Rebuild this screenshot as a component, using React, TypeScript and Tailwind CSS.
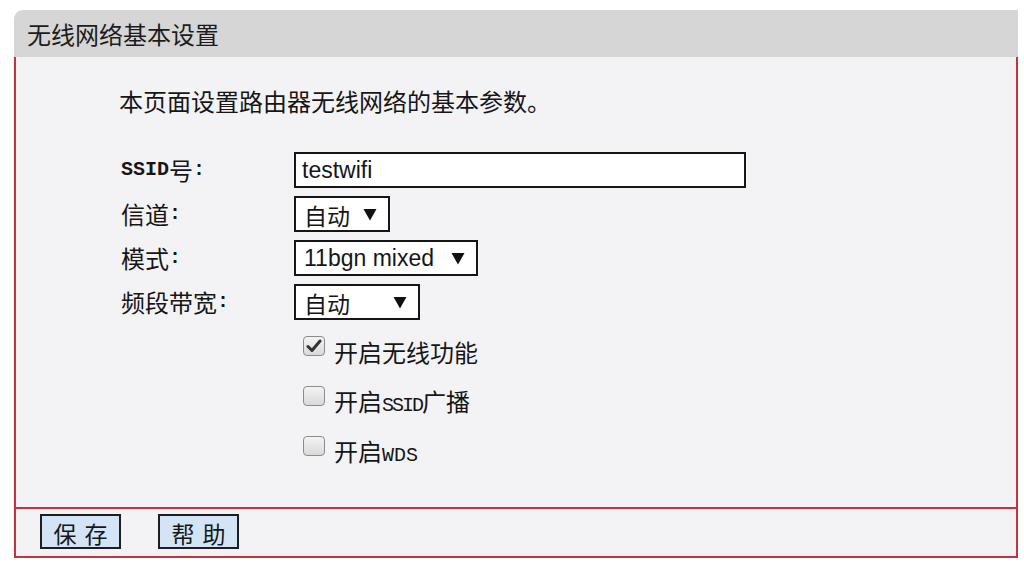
import React from "react";

const CJK = "font-['Noto_Sans_CJK_SC',sans-serif]";

function Arrow() {
  return (
    <svg width="14" height="13" viewBox="0 0 14 13" className="shrink-0">
      <polygon points="0.5,1 13.5,1 7,12.5" fill="#111" />
    </svg>
  );
}

function Label({ children }: { children: React.ReactNode }) {
  return (
    <div className={`w-[173px] flex items-center h-full text-[24px] leading-none text-[#161616] ${CJK}`}>
      {children}
    </div>
  );
}

function Colon() {
  return <span className="font-['Liberation_Mono',monospace] text-[20px] font-bold">:</span>;
}

function Select({ w, children }: { w: string; children: React.ReactNode }) {
  return (
    <div className={`${w} h-[36px] border-2 border-[#161616] bg-white flex items-center justify-between pl-[8px] pr-[11px]`}>
      {children}
    </div>
  );
}

function Checkbox({ checked }: { checked?: boolean }) {
  return (
    <div className="w-[22px] h-[20px] mb-[13px] rounded-[4px] border border-[#8c8c8c] bg-gradient-to-b from-[#f4f4f4] to-[#d9d9d9] flex items-center justify-center shrink-0">
      {checked && (
        <svg width="16" height="14" viewBox="0 0 16 14">
          <path d="M2 7.5 L6 11.5 L14 2" stroke="#333" strokeWidth="3" fill="none" strokeLinecap="round" strokeLinejoin="round" />
        </svg>
      )}
    </div>
  );
}

export default function App() {
  return (
    <div className="w-[1024px] h-[572px] bg-white pt-[10px] pl-[14px] overflow-hidden">
      <div className="w-[1004px]">
        <div className={`h-[47px] bg-[#d6d6d6] rounded-tl-[9px] flex items-center pl-[13px] text-[24px] text-[#1c1c1c] ${CJK}`}>
          无线网络基本设置
        </div>
        <div className="border-x-2 border-b-2 border-[#c4323b] bg-[#f3f3f5]">
          <div className="h-[450px] pt-[28px] pl-[103px]">
            <div className={`h-[32px] leading-[32px] text-[24px] text-[#161616] ${CJK}`}>
              本页面设置路由器无线网络的基本参数。
            </div>
            <div className="mt-[35px] pl-[2px] flex flex-col gap-[8px]">
              <div className="h-[36px] flex items-center">
                <Label>
                  <span className="font-['Liberation_Mono',monospace] text-[20px] font-bold">SSID</span>
                  号<Colon />
                </Label>
                <div className="w-[452px] h-[36px] border-2 border-[#161616] bg-white flex items-center pl-[6px] font-['Liberation_Sans',sans-serif] text-[23px] text-[#161616]">
                  testwifi
                </div>
              </div>
              <div className="h-[36px] flex items-center">
                <Label>
                  信道<Colon />
                </Label>
                <Select w="w-[96px]">
                  <span className={`text-[23px] leading-none pt-[3px] text-[#161616] ${CJK}`}>自动</span>
                  <Arrow />
                </Select>
              </div>
              <div className="h-[36px] flex items-center">
                <Label>
                  模式<Colon />
                </Label>
                <Select w="w-[184px]">
                  <span className="text-[23px] leading-none pt-[1px] font-['Liberation_Sans',sans-serif] text-[#161616]">11bgn mixed</span>
                  <Arrow />
                </Select>
              </div>
              <div className="h-[36px] flex items-center">
                <Label>
                  频段带宽<Colon />
                </Label>
                <Select w="w-[126px]">
                  <span className={`text-[23px] leading-none pt-[3px] text-[#161616] ${CJK}`}>自动</span>
                  <Arrow />
                </Select>
              </div>
            </div>
            <div className="mt-[16px] pl-[184px] flex flex-col gap-[18px]">
              {[
                { t: <>开启无线功能</>, c: true },
                { t: <>开启<span className="font-['Liberation_Mono',monospace] text-[20px] tracking-[-2px]">SSID</span>广播</>, c: false },
                { t: <>开启<span className="font-['Liberation_Mono',monospace] text-[20px]">WDS</span></>, c: false },
              ].map((r, i) => (
                <div key={i} className="h-[32px] flex items-center gap-[9px]">
                  <Checkbox checked={r.c} />
                  <span className={`text-[24px] leading-none text-[#161616] ${CJK}`}>{r.t}</span>
                </div>
              ))}
            </div>
          </div>
          <div className="h-[49px] border-t-2 border-[#c4323b] pt-[5px] pl-[24px] flex items-start gap-[37px]">
            {["保存", "帮助"].map((b) => (
              <div
                key={b}
                className={`w-[81px] h-[35px] bg-[#d3e4f6] border-2 border-[#1e1e1e] flex items-center justify-center text-[23px] tracking-[8px] pl-[8px] pt-[3px] text-[#161616] ${CJK}`}
              >
                {b}
              </div>
            ))}
          </div>
        </div>
      </div>
    </div>
  );
}
